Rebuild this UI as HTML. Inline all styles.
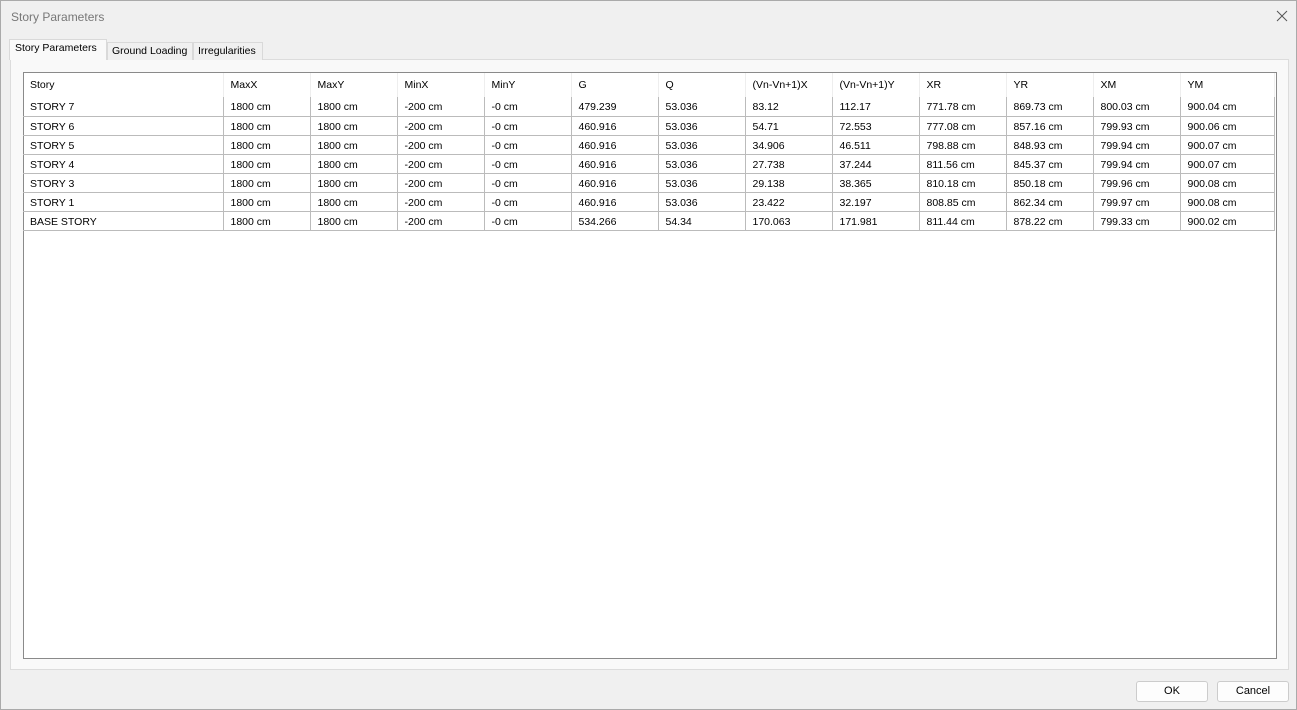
<!DOCTYPE html>
<html><head><style>
*{margin:0;padding:0;box-sizing:border-box}
body{width:1297px;height:710px;background:#f0f0f0;font-family:"Liberation Sans",sans-serif;font-size:11px;color:#000;position:relative;overflow:hidden}
.win{position:absolute;left:0;top:0;width:1297px;height:710px;border:1px solid #aaa;background:#f0f0f0}
.title{position:absolute;left:10px;top:9px;font-size:12px;color:#777}
.close{position:absolute;left:1275px;top:9px}
.tab{position:absolute;top:41px;height:18px;border:1px solid #d9d9d9;border-bottom:none;padding:2px 0 0 4px;font-size:10.5px;background:#f0f0f0;white-space:nowrap;overflow:hidden}
.tab.act{top:38px;height:21px;background:#f9f9f9;padding-top:2px;padding-left:5px}
.panel{position:absolute;left:9px;top:58px;width:1279px;height:611px;border:1px solid #dcdcdc;background:#f9f9f9}
.grid{position:absolute;left:22px;top:71px;width:1254px;height:587px;border:1px solid #8a8a8a;background:#fff}
table{position:absolute;left:-1px;top:0;border-collapse:collapse;table-layout:fixed}
td{height:19px;padding:0 0 0 7px;white-space:nowrap;border-right:1px solid #bbb;border-bottom:1px solid #bbb;font-size:10.5px;vertical-align:middle;line-height:12px;padding-top:2px}
td:first-child{padding-left:7px}
tr.h td{height:24px;border-right:1px solid #eee;border-bottom:none;vertical-align:middle;padding-top:0}
.btn{position:absolute;top:680px;width:72px;height:21px;border:1px solid #ccc;border-radius:3px;background:#fdfdfd;text-align:center;line-height:19px;font-size:11px}
</style></head><body>
<div class="win">
<div class="title">Story Parameters</div>
<svg class="close" width="12" height="12" viewBox="0 0 12 12"><path d="M1 1L11 11M11 1L1 11" stroke="#555" stroke-width="1"/></svg>
<div class="panel"></div>
<div class="tab act" style="left:8px;width:98px">Story Parameters</div>
<div class="tab" style="left:106px;width:86px">Ground Loading</div>
<div class="tab" style="left:192px;width:70px">Irregularities</div>
<div class="grid">
<table>
<colgroup><col style="width:200px"><col style="width:87px"><col style="width:87px"><col style="width:87px"><col style="width:87px"><col style="width:87px"><col style="width:87px"><col style="width:87px"><col style="width:87px"><col style="width:87px"><col style="width:87px"><col style="width:87px"><col style="width:94px"></colgroup>
<tr class="h"><td>Story</td><td>MaxX</td><td>MaxY</td><td>MinX</td><td>MinY</td><td>G</td><td>Q</td><td>(Vn-Vn+1)X</td><td>(Vn-Vn+1)Y</td><td>XR</td><td>YR</td><td>XM</td><td>YM</td></tr>
<tr><td>STORY 7</td><td>1800 cm</td><td>1800 cm</td><td>-200 cm</td><td>-0 cm</td><td>479.239</td><td>53.036</td><td>83.12</td><td>112.17</td><td>771.78 cm</td><td>869.73 cm</td><td>800.03 cm</td><td>900.04 cm</td></tr>
<tr><td>STORY 6</td><td>1800 cm</td><td>1800 cm</td><td>-200 cm</td><td>-0 cm</td><td>460.916</td><td>53.036</td><td>54.71</td><td>72.553</td><td>777.08 cm</td><td>857.16 cm</td><td>799.93 cm</td><td>900.06 cm</td></tr>
<tr><td>STORY 5</td><td>1800 cm</td><td>1800 cm</td><td>-200 cm</td><td>-0 cm</td><td>460.916</td><td>53.036</td><td>34.906</td><td>46.511</td><td>798.88 cm</td><td>848.93 cm</td><td>799.94 cm</td><td>900.07 cm</td></tr>
<tr><td>STORY 4</td><td>1800 cm</td><td>1800 cm</td><td>-200 cm</td><td>-0 cm</td><td>460.916</td><td>53.036</td><td>27.738</td><td>37.244</td><td>811.56 cm</td><td>845.37 cm</td><td>799.94 cm</td><td>900.07 cm</td></tr>
<tr><td>STORY 3</td><td>1800 cm</td><td>1800 cm</td><td>-200 cm</td><td>-0 cm</td><td>460.916</td><td>53.036</td><td>29.138</td><td>38.365</td><td>810.18 cm</td><td>850.18 cm</td><td>799.96 cm</td><td>900.08 cm</td></tr>
<tr><td>STORY 1</td><td>1800 cm</td><td>1800 cm</td><td>-200 cm</td><td>-0 cm</td><td>460.916</td><td>53.036</td><td>23.422</td><td>32.197</td><td>808.85 cm</td><td>862.34 cm</td><td>799.97 cm</td><td>900.08 cm</td></tr>
<tr><td>BASE STORY</td><td>1800 cm</td><td>1800 cm</td><td>-200 cm</td><td>-0 cm</td><td>534.266</td><td>54.34</td><td>170.063</td><td>171.981</td><td>811.44 cm</td><td>878.22 cm</td><td>799.33 cm</td><td>900.02 cm</td></tr>
</table>
</div>
<div class="btn" style="left:1135px">OK</div>
<div class="btn" style="left:1216px">Cancel</div>
</div>
</body></html>
